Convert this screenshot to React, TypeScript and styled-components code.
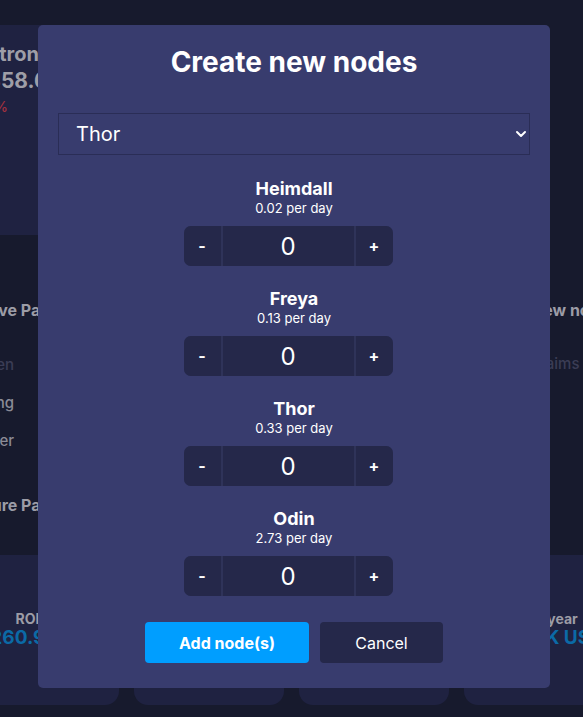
import React, { useState } from "react";
import styled, { createGlobalStyle } from "styled-components";

const GlobalStyle = createGlobalStyle`
  * { box-sizing: border-box; }
  html, body { margin: 0; padding: 0; }
  body {
    background: #171a2d;
    font-family: Inter, "Noto Sans", "Liberation Sans", sans-serif;
    color: #ffffff;
  }
`;

const Page = styled.div`
  position: relative;
  width: 100%;
  height: 717px;
  overflow: hidden;
  background: #171a2d;
`;

/* ---------- dashboard behind the modal ---------- */

const Dashboard = styled.div`
  padding-top: 25px;
  display: flex;
  flex-direction: column;
`;

const TopCard = styled.div`
  width: 340px;
  height: 210px;
  margin-left: -60px;
  padding: 16px 18px;
  background: #1f2241;
  border-radius: 14px;
  display: flex;
  flex-direction: column;
  white-space: nowrap;
`;

const CoinName = styled.div`
  font-size: 20px;
  font-weight: 700;
  line-height: 26px;
  color: #9e9ea7;
`;

const CoinPrice = styled.div`
  font-size: 21px;
  font-weight: 700;
  line-height: 28px;
  color: #9e9ea7;
`;

const CoinChange = styled.div`
  margin-top: 2px;
  font-size: 14px;
  font-weight: 500;
  line-height: 20px;
  color: #a3313f;
`;

const Middle = styled.div`
  height: 320px;
  display: flex;
  justify-content: space-between;
`;

const SidePanel = styled.div<{ $side: "left" | "right" }>`
  width: ${(p) => (p.$side === "left" ? "220px" : "100px")};
  margin-left: ${(p) => (p.$side === "left" ? "-33px" : "0")};
  margin-right: ${(p) => (p.$side === "right" ? "-48px" : "0")};
  padding-top: 65px;
  display: flex;
  flex-direction: column;
  white-space: nowrap;
`;

const PanelHeading = styled.div<{ $gap?: number }>`
  margin-top: ${(p) => p.$gap ?? 0}px;
  font-size: 16px;
  font-weight: 700;
  line-height: 20px;
  color: #9c9ca6;
`;

const PanelRow = styled.div<{ $dim?: boolean; $first?: boolean }>`
  width: 47px;
  height: 38px;
  margin-top: ${(p) => (p.$first ? "25px" : "0")};
  display: flex;
  align-items: center;
  justify-content: flex-end;
  font-size: 15px;
  font-weight: 500;
  color: ${(p) => (p.$dim ? "#3b3d55" : "#8b8b96")};
`;

const RightRow = styled.div<{ $dim?: boolean }>`
  margin-top: 34px;
  font-size: 15px;
  font-weight: 500;
  color: ${(p) => (p.$dim ? "#3b3d55" : "#8b8b96")};
`;

const TileRow = styled.div`
  display: flex;
  gap: 15px;
  margin: 0 -31px;
`;

const Tile = styled.div<{ $align: "center" | "left"; $padLeft?: number; $padRight?: number }>`
  flex: 0 0 150px;
  height: 150px;
  padding: 55px ${(p) => p.$padRight ?? 0}px 0 ${(p) => p.$padLeft ?? 0}px;
  background: #1f2241;
  border-radius: 14px;
  text-align: ${(p) => p.$align};
  white-space: nowrap;
`;

const TileLabel = styled.div`
  font-size: 14px;
  font-weight: 700;
  line-height: 17px;
  color: #9c9ca6;
`;

const TileValue = styled.div`
  font-size: 19px;
  font-weight: 700;
  line-height: 22px;
  color: #0b6aa6;
`;

/* ---------- modal ---------- */

const Overlay = styled.div`
  position: absolute;
  inset: 0;
  display: flex;
  align-items: flex-start;
  padding: 25px 0 0 38px;
`;

const Modal = styled.div`
  width: 512px;
  padding: 20px 20px 25px;
  background: #383c6e;
  border-radius: 5px;
  display: flex;
  flex-direction: column;
`;

const Title = styled.h2`
  margin: 0;
  font-size: 28px;
  font-weight: 700;
  line-height: 34px;
  text-align: center;
  color: #ffffff;
`;

const SelectWrap = styled.div`
  position: relative;
  margin-top: 34px;
`;

const NodeSelect = styled.select`
  width: 100%;
  height: 42px;
  padding: 0 17px;
  appearance: none;
  background: transparent;
  border: 1px solid #2a2d56;
  border-radius: 0;
  color: #ffffff;
  font-family: inherit;
  font-size: 20px;
  outline: none;

  option {
    background: #383c6e;
  }
`;

const Chevron = styled.svg`
  position: absolute;
  right: 1px;
  top: 50%;
  transform: translateY(-50%);
  pointer-events: none;
`;

const NodeList = styled.div`
  margin-top: 23px;
  display: flex;
  flex-direction: column;
  align-items: center;
  gap: 22px;
`;

const NodeItem = styled.div`
  display: flex;
  flex-direction: column;
  align-items: center;
`;

const NodeName = styled.div`
  font-size: 18px;
  font-weight: 700;
  line-height: 22px;
`;

const NodeRate = styled.div`
  font-size: 13px;
  line-height: 16px;
`;

const Counter = styled.div`
  margin: 10px 12px 0 0;
  width: 209px;
  height: 40px;
  display: flex;
  gap: 2px;
  background: #2f3359;
  border-radius: 7px;
  overflow: hidden;
`;

const StepButton = styled.button`
  flex: 0 0 37px;
  border: none;
  background: #25284a;
  color: #ffffff;
  font-family: inherit;
  font-size: 16px;
  font-weight: 700;
  cursor: pointer;
`;

const CountInput = styled.input`
  flex: 1;
  min-width: 0;
  border: none;
  background: #25284a;
  color: #ffffff;
  font-family: inherit;
  font-size: 24px;
  text-align: center;
  outline: none;
`;

const Actions = styled.div`
  margin-top: 26px;
  display: flex;
  justify-content: center;
  gap: 11px;
`;

const ActionButton = styled.button<{ $primary?: boolean }>`
  width: ${(p) => (p.$primary ? "164px" : "123px")};
  height: 41px;
  border: none;
  border-radius: 4px;
  background: ${(p) => (p.$primary ? "#009eff" : "#25284a")};
  color: #ffffff;
  font-family: inherit;
  font-size: 16px;
  font-weight: ${(p) => (p.$primary ? 700 : 400)};
  cursor: pointer;
`;

const nodes = [
  { name: "Heimdall", rate: "0.02" },
  { name: "Freya", rate: "0.13" },
  { name: "Thor", rate: "0.33" },
  { name: "Odin", rate: "2.73" },
];

const App: React.FC = () => {
  const [tier, setTier] = useState("Thor");
  const [counts, setCounts] = useState<number[]>(nodes.map(() => 0));

  const step = (i: number, d: number) =>
    setCounts((prev) => prev.map((c, j) => (j === i ? Math.max(0, c + d) : c)));

  return (
    <>
      <GlobalStyle />
      <Page>
        <Dashboard>
          <TopCard>
            <CoinName>Electron</CoinName>
            <CoinPrice>$1,358.62</CoinPrice>
            <CoinChange>−2.31%</CoinChange>
          </TopCard>
          <Middle>
            <SidePanel $side="left">
              <PanelHeading>Active Passive Income</PanelHeading>
              <PanelRow $dim $first>
                Token
              </PanelRow>
              <PanelRow>Pending</PanelRow>
              <PanelRow>Holder</PanelRow>
              <PanelHeading $gap={36}>Future Passive Income</PanelHeading>
            </SidePanel>
            <SidePanel $side="right">
              <PanelHeading>New nodes</PanelHeading>
              <RightRow $dim>Claims</RightRow>
            </SidePanel>
          </Middle>
          <TileRow>
            <Tile $align="center" $padRight={33}>
              <TileLabel>ROI</TileLabel>
              <TileValue>260.9%</TileValue>
            </Tile>
            <Tile $align="center">
              <TileLabel>Rewards</TileLabel>
              <TileValue>0.00</TileValue>
            </Tile>
            <Tile $align="center">
              <TileLabel>Nodes</TileLabel>
              <TileValue>0</TileValue>
            </Tile>
            <Tile $align="left" $padLeft={57}>
              <TileLabel>Per year</TileLabel>
              <TileValue>3.1K USD</TileValue>
            </Tile>
          </TileRow>
        </Dashboard>

        <Overlay>
          <Modal>
            <Title>Create new nodes</Title>
            <SelectWrap>
              <NodeSelect value={tier} onChange={(e) => setTier(e.target.value)}>
                {nodes.map((n) => (
                  <option key={n.name} value={n.name}>
                    {n.name}
                  </option>
                ))}
              </NodeSelect>
              <Chevron width="16" height="16" viewBox="0 0 16 16">
                <polyline
                  points="4,6 8,10 12,6"
                  fill="none"
                  stroke="#ffffff"
                  strokeWidth="2"
                  strokeLinecap="round"
                  strokeLinejoin="round"
                />
              </Chevron>
            </SelectWrap>
            <NodeList>
              {nodes.map((n, i) => (
                <NodeItem key={n.name}>
                  <NodeName>{n.name}</NodeName>
                  <NodeRate>{n.rate} per day</NodeRate>
                  <Counter>
                    <StepButton onClick={() => step(i, -1)}>-</StepButton>
                    <CountInput value={counts[i]} readOnly />
                    <StepButton onClick={() => step(i, 1)}>+</StepButton>
                  </Counter>
                </NodeItem>
              ))}
            </NodeList>
            <Actions>
              <ActionButton $primary>Add node(s)</ActionButton>
              <ActionButton>Cancel</ActionButton>
            </Actions>
          </Modal>
        </Overlay>
      </Page>
    </>
  );
};

export default App;
